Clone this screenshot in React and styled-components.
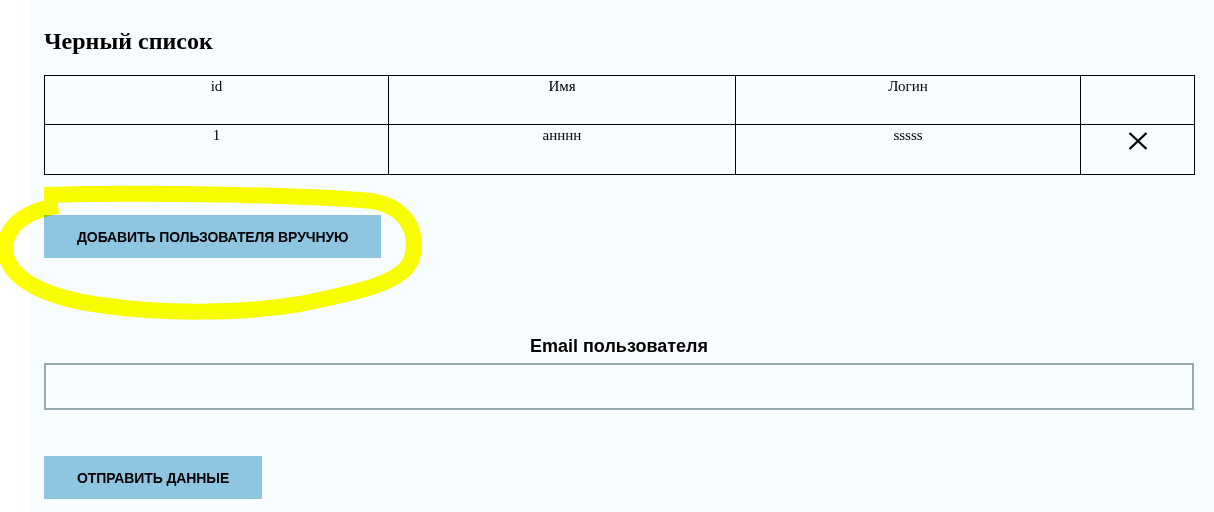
import React from 'react';
import styled, { createGlobalStyle } from 'styled-components';

const GlobalStyle = createGlobalStyle`
  body {
    margin: 0;
    background: #ffffff;
  }
`;

const Page = styled.div`
  position: relative;
  padding-left: 30px;
  height: 512px;
  overflow: hidden;
`;

const Panel = styled.div`
  background-color: #f7fcff;
  padding: 27px 20px 14px 14px;
  min-height: 512px;
  box-sizing: border-box;
`;

const Title = styled.h2`
  font-family: 'Liberation Serif', 'Times New Roman', serif;
  font-size: 24px;
  line-height: 28px;
  font-weight: bold;
  color: #000;
  margin: 0 0 20px;
`;

const Table = styled.table`
  width: 1150px;
  border-collapse: collapse;
  table-layout: fixed;
  font-family: 'Liberation Serif', 'Times New Roman', serif;
  font-size: 15px;
  color: #000;
`;

const Cell = styled.td`
  border: 1px solid #000;
  padding: 2px 1px 1px;
  height: ${(p) => p.$h}px;
  text-align: center;
  vertical-align: top;
`;

const RemoveIcon = styled.svg`
  display: block;
  margin: 5px auto 0;
`;

const Button = styled.button`
  display: block;
  height: 43px;
  padding: 0 33px;
  border: none;
  background-color: #8ec6e2;
  color: #000;
  font-family: 'Liberation Sans', Arial, sans-serif;
  font-size: 14px;
  font-weight: bold;
  letter-spacing: -0.1px;
  text-transform: uppercase;
  margin-top: ${(p) => p.$top}px;
  cursor: pointer;
`;

const Label = styled.div`
  font-family: 'Liberation Sans', Arial, sans-serif;
  font-size: 18px;
  line-height: 18px;
  font-weight: bold;
  text-align: center;
  color: #000;
  margin: 79px 0 8px;
  width: 1150px;
`;

const Input = styled.input`
  display: block;
  width: 1150px;
  height: 47px;
  box-sizing: border-box;
  border: 2px solid #96a9ae;
  background: transparent;
  outline: none;
`;

const Scribble = styled.svg`
  position: absolute;
  left: 0;
  top: 0;
  pointer-events: none;
  mix-blend-mode: multiply;
`;

const columns = [344, 347, 345, 114];

const App = () => {
  return (
    <Page>
      <GlobalStyle />
      <Panel>
        <Title>Черный список</Title>
        <Table>
          <colgroup>
            {columns.map((w, i) => (
              <col key={i} style={{ width: w }} />
            ))}
          </colgroup>
          <tbody>
            <tr>
              <Cell $h={45}>id</Cell>
              <Cell $h={45}>Имя</Cell>
              <Cell $h={45}>Логин</Cell>
              <Cell $h={45}></Cell>
            </tr>
            <tr>
              <Cell $h={46}>1</Cell>
              <Cell $h={46}>анннн</Cell>
              <Cell $h={46}>sssss</Cell>
              <Cell $h={46}>
                <RemoveIcon width="20" height="18" viewBox="0 0 20 18">
                  <path d="M1.5 1L18.5 17M18.5 1L1.5 17" stroke="#000" strokeWidth="2.4" fill="none" />
                </RemoveIcon>
              </Cell>
            </tr>
          </tbody>
        </Table>
        <Button $top={40}>Добавить пользователя вручную</Button>
        <Label>Email пользователя</Label>
        <Input type="text" />
        <Button $top={46}>Отправить данные</Button>
      </Panel>
      <Scribble width="440" height="340" viewBox="0 0 440 340">
        <path
          d="M44 195 C150 192 300 195 372 201 C410 208 418 235 412 258 C405 282 360 292 300 304 C240 314 160 314 100 305 C50 298 12 282 6 255 C2 232 18 212 58 206"
          stroke="#ffff00"
          strokeWidth="16"
          fill="none"
          strokeLinecap="butt"
          strokeLinejoin="round"
        />
      </Scribble>
    </Page>
  );
};

export default App;
